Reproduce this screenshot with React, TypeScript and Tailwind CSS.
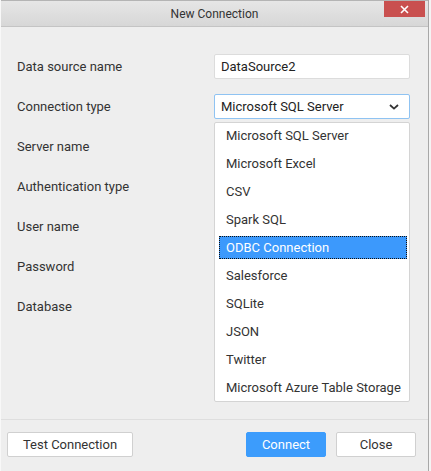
import React from "react";

const labels = [
  "Data source name",
  "Connection type",
  "Server name",
  "Authentication type",
  "User name",
  "Password",
  "Database",
];

const items = [
  "Microsoft SQL Server",
  "Microsoft Excel",
  "CSV",
  "Spark SQL",
  "ODBC Connection",
  "Salesforce",
  "SQLite",
  "JSON",
  "Twitter",
  "Microsoft Azure Table Storage",
];

export default function App() {
  return (
    <div
      className="w-[431px] h-[471px] bg-[#f4f4f4] overflow-hidden"
      style={{ fontFamily: "Roboto, 'Liberation Sans', sans-serif" }}
    >
      <div className="relative w-[429px] h-[471px] bg-[#eeeeee] border-r border-[#a8a8a8] border-l border-l-[#f8f8f8] flex flex-col">
        {/* Title bar */}
        <div className="relative h-[27px] shrink-0 border-t border-[#b4b4b4] border-b border-b-[#c4c4c4] bg-gradient-to-b from-[#e6e6e6] to-[#d7d7d7] flex items-center justify-center">
          <span className="text-[12px] text-[#333333] leading-none">New Connection</span>
          <div className="absolute right-[3px] top-[0px] w-[41px] h-[16px] bg-[#c9504f] flex items-center justify-center">
            <svg width="9" height="9" viewBox="0 0 9 9">
              <path d="M1 1 L8 8 M8 1 L1 8" stroke="#ffffff" strokeWidth="1.6" />
            </svg>
          </div>
        </div>

        {/* Body */}
        <div className="relative h-[393px] shrink-0 border-b border-[#dedede] pt-[27px] pl-[16px]">
          <div className="flex flex-col gap-[15px]">
            {labels.map((l, i) => (
              <div key={l} className="flex items-center h-[25px]">
                <div className="w-[197px] text-[13px] text-[#333333] leading-none">{l}</div>
                {i === 0 && (
                  <div className="w-[196px] h-[25px] bg-white border border-[#dcdcdc] rounded-[2px] flex items-center px-[6px] text-[13px] text-[#222222]">
                    DataSource2
                  </div>
                )}
                {i === 1 && (
                  <div className="w-[196px] h-[25px] bg-white border border-[#8fc3f2] rounded-[2px] flex items-center justify-between pl-[6px] pr-[10px] text-[13px] text-[#222222]">
                    <span>Microsoft SQL Server</span>
                    <svg width="10" height="6" viewBox="0 0 10 6">
                      <path d="M1 1 L5 4.6 L9 1" stroke="#333333" strokeWidth="1.8" fill="none" />
                    </svg>
                  </div>
                )}
              </div>
            ))}
          </div>

          {/* Dropdown list */}
          <div className="absolute left-[213px] top-[95px] w-[196px] h-[280px] bg-white border border-[#d4d4d4] rounded-[2px] pt-[1px] pl-[4px] pr-[2px] flex flex-col gap-[5px]">
            {items.map((it) => {
              const sel = it === "ODBC Connection";
              return (
                <div
                  key={it}
                  className={
                    sel
                      ? "h-[23px] shrink-0 flex items-center pl-[6px] text-[13px] text-white bg-[#3c99fc] border border-dotted border-[#111111]"
                      : "h-[23px] shrink-0 flex items-center pl-[7px] text-[13px] text-[#333333]"
                  }
                >
                  {it}
                </div>
              );
            })}
          </div>
        </div>

        {/* Footer */}
        <div className="flex items-start pt-[12px] pl-[6px] pr-[12px]">
          <button className="w-[126px] h-[25px] bg-white border border-[#d0d0d0] rounded-[2px] text-[13px] text-[#333333] flex items-center justify-center">
            Test Connection
          </button>
          <div className="flex-1" />
          <button className="w-[80px] h-[25px] bg-[#3c9cfc] border border-[#3c9cfc] rounded-[2px] text-[13px] text-white flex items-center justify-center">
            Connect
          </button>
          <button className="ml-[10px] w-[80px] h-[25px] bg-white border border-[#d0d0d0] rounded-[2px] text-[13px] text-[#333333] flex items-center justify-center">
            Close
          </button>
        </div>
      </div>
    </div>
  );
}
